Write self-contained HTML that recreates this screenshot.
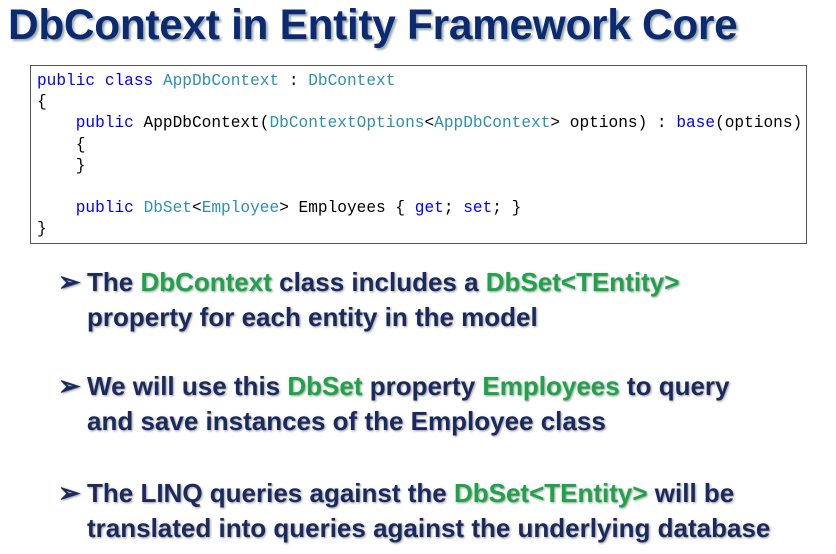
<!DOCTYPE html>
<html><head><style>
body{margin:0;width:836px;height:554px;background:#fff;overflow:hidden;position:relative;font-family:"Liberation Sans",sans-serif}
h1{position:absolute;left:8px;top:1px;margin:0;font-size:42.4px;font-weight:bold;color:#0c2a72;text-shadow:2px 2px 2px #9aa;letter-spacing:-0.3px;white-space:nowrap}
.code{position:absolute;left:30px;top:65px;width:777px;height:179px;border:1px solid #555;box-sizing:border-box;font-family:"Liberation Mono",monospace;font-size:16.15px;line-height:21.2px;padding:5px 0 0 6px;white-space:pre;color:#000}
.k{color:#0000ff}.t{color:#2b91af}
.b{position:absolute;left:58px;font-size:26px;font-weight:bold;color:#1a2a5e;line-height:35px;text-shadow:1px 1px 2px #999;white-space:nowrap}
.g{color:#1fa34a}
.ar{display:inline-block;width:29px;font-size:27px;line-height:20px}
</style></head><body>
<h1>DbContext in Entity Framework Core</h1>
<div class="code"><span class="k">public</span> <span class="k">class</span> <span class="t">AppDbContext</span> : <span class="t">DbContext</span>
{
    <span class="k">public</span> AppDbContext(<span class="t">DbContextOptions</span>&lt;<span class="t">AppDbContext</span>&gt; options) : <span class="k">base</span>(options)
    {
    }

    <span class="k">public</span> <span class="t">DbSet</span>&lt;<span class="t">Employee</span>&gt; Employees { <span class="k">get</span>; <span class="k">set</span>; }
}</div>
<div class="b" style="top:265px"><span class="ar">&#10146;</span>The <span class="g">DbContext</span> class includes a <span class="g">DbSet&lt;TEntity&gt;</span><br><span class="ar"></span>property for each entity in the model</div>
<div class="b" style="top:369px"><span class="ar">&#10146;</span>We will use this <span class="g">DbSet</span> property <span class="g">Employees</span> to query<br><span class="ar"></span>and save instances of the Employee class</div>
<div class="b" style="top:476px"><span class="ar">&#10146;</span>The LINQ queries against the <span class="g">DbSet&lt;TEntity&gt;</span> will be<br><span class="ar"></span>translated into queries against the underlying database</div>
</body></html>
